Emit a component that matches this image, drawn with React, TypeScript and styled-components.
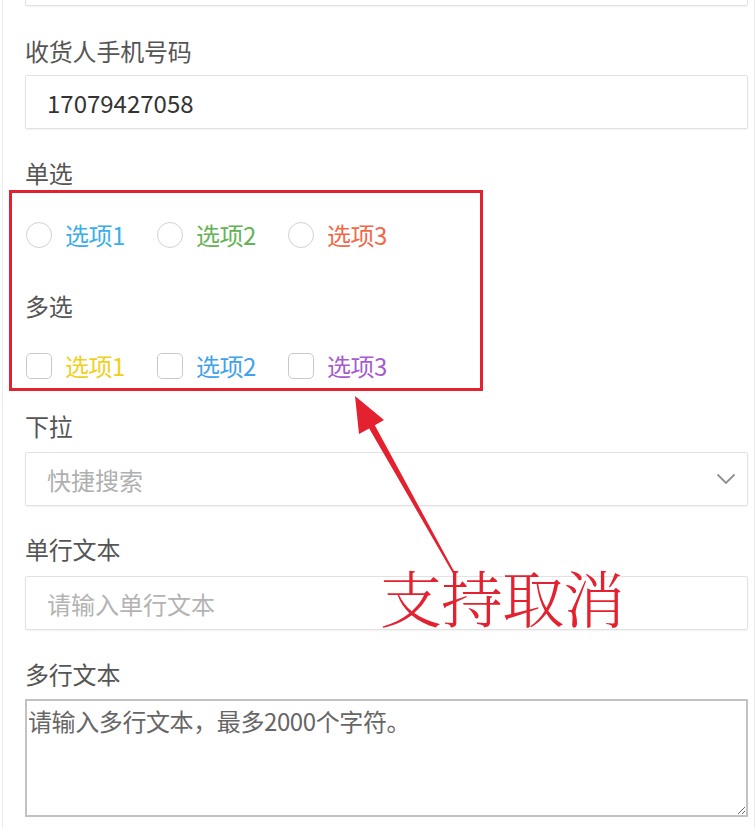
import React from "react";
import styled, { createGlobalStyle } from "styled-components";

const Global = createGlobalStyle`
  html, body { margin: 0; padding: 0; background: #ffffff; }
  body { font-family: "Noto Sans CJK SC", "Noto Sans", sans-serif; }
  * { box-sizing: border-box; }
`;

const Page = styled.div`
  position: relative;
  width: 756px;
  height: 828px;
  overflow: hidden;
  padding: 0 1px 0 2px;
  background: #fff;
`;

const Panel = styled.div`
  height: 100%;
  border-left: 1px solid #ececec;
  border-right: 1px solid #ececec;
  padding: 0 6px 0 22px;
  display: flex;
  flex-direction: column;
`;

const Field = styled.div<{ $mt: number; $gap: number }>`
  display: flex;
  flex-direction: column;
  margin-top: ${(p) => p.$mt}px;
  gap: ${(p) => p.$gap}px;
`;

const Label = styled.div`
  font-size: 24px;
  line-height: 32px;
  height: 34px;
  color: #555;
  letter-spacing: -0.2px;
`;

const TextInput = styled.input<{ $mt?: number }>`
  display: block;
  width: 100%;
  height: 54px;
  margin-top: ${(p) => p.$mt ?? 0}px;
  padding: 0 21px;
  border: 1px solid #e2e2e2;
  border-radius: 2px;
  box-shadow: 0 1px 2px rgba(0, 0, 0, 0.06);
  font-family: "Noto Sans CJK SC", "Noto Sans", sans-serif;
  font-size: 24px;
  color: #333;
  background: #fff;
  outline: none;
  &::placeholder { color: #b3b3b3; }
`;

const Select = styled.div`
  height: 54px;
  display: flex;
  align-items: center;
  justify-content: space-between;
  padding: 0 11px 0 21px;
  border: 1px solid #e2e2e2;
  border-radius: 2px;
  box-shadow: 0 1px 2px rgba(0, 0, 0, 0.06);
  font-size: 24px;
  color: #b0b0b0;
`;

const TextArea = styled.textarea`
  display: block;
  width: 100%;
  height: 118px;
  padding: 4px 1px;
  border: 2px solid #c2c2c2;
  font-family: "Noto Sans CJK SC", "Noto Sans", sans-serif;
  font-size: 24px;
  line-height: 31px;
  color: #333;
  resize: both;
  outline: none;
  &::placeholder { color: #666; letter-spacing: -0.4px; }
`;

const Options = styled.div`
  display: grid;
  grid-template-columns: repeat(3, 131px);
  height: 40px;
  align-items: center;
  margin-left: 1px;
`;

const Option = styled.label`
  display: flex;
  align-items: center;
  gap: 13px;
`;

const RadioDot = styled.span`
  width: 26px;
  height: 26px;
  border-radius: 50%;
  border: 1.5px solid #d2d2d2;
  background: #fff;
`;

const CheckBox = styled.span`
  width: 26px;
  height: 26px;
  border-radius: 5px;
  border: 1.5px solid #c9c9c9;
  background: #fff;
`;

const OptionText = styled.span<{ $color: string }>`
  font-size: 24px;
  line-height: 34px;
  color: ${(p) => p.$color};
  letter-spacing: -0.5px;
`;

const Overlay = styled.div`
  position: absolute;
  inset: 0;
  pointer-events: none;
`;

const RedFrame = styled.div`
  position: absolute;
  left: 9px;
  top: 190px;
  width: 474px;
  height: 201px;
  border: 3px solid #e3212f;
`;

const Note = styled.div`
  position: absolute;
  left: 380px;
  top: 566px;
  font-family: "Noto Serif CJK SC", "Noto Sans CJK SC", serif;
  font-weight: 300;
  font-size: 62px;
  line-height: 1;
  color: #e3212f;
  letter-spacing: -1px;
`;

const ArrowSvg = styled.svg`
  position: absolute;
  left: 0;
  top: 0;
`;

const radios = [
  { t: "选项1", c: "#3aaee8" },
  { t: "选项2", c: "#62b356" },
  { t: "选项3", c: "#f2694a" },
];
const checks = [
  { t: "选项1", c: "#f0d01c" },
  { t: "选项2", c: "#3fa2ec" },
  { t: "选项3", c: "#a65cd0" },
];

export default function App() {
  return (
    <>
      <Global />
      <Page>
        <Panel>
          <TextInput $mt={-48} readOnly />
          <Field $mt={29} $gap={6}>
            <Label>收货人手机号码</Label>
            <TextInput defaultValue="17079427058" />
          </Field>
          <Field $mt={28} $gap={24}>
            <Label>单选</Label>
            <Options>
              {radios.map((r) => (
                <Option key={r.t + r.c}>
                  <RadioDot />
                  <OptionText $color={r.c}>{r.t}</OptionText>
                </Option>
              ))}
            </Options>
          </Field>
          <Field $mt={35} $gap={22}>
            <Label>多选</Label>
            <Options>
              {checks.map((r) => (
                <Option key={r.t + r.c}>
                  <CheckBox />
                  <OptionText $color={r.c}>{r.t}</OptionText>
                </Option>
              ))}
            </Options>
          </Field>
          <Field $mt={24} $gap={8}>
            <Label>下拉</Label>
            <Select>
              <span>快捷搜索</span>
              <svg width="20" height="12" viewBox="0 0 20 12">
                <polyline points="1.5,1.5 10,10 18.5,1.5" fill="none" stroke="#8f8f8f" strokeWidth="1.8" />
              </svg>
            </Select>
          </Field>
          <Field $mt={27} $gap={9}>
            <Label>单行文本</Label>
            <TextInput placeholder="请输入单行文本" />
          </Field>
          <Field $mt={28} $gap={7}>
            <Label>多行文本</Label>
            <TextArea placeholder="请输入多行文本，最多2000个字符。" />
          </Field>
        </Panel>
        <Overlay>
          <RedFrame />
          <ArrowSvg width="756" height="828" viewBox="0 0 756 828">
            <polygon
              points="355,396 384,420 374.8,425.2 455.8,574.6 454.2,575.4 369.2,428.4 359,434"
              fill="#e3212f"
            />
          </ArrowSvg>
          <Note>支持取消</Note>
        </Overlay>
      </Page>
    </>
  );
}
